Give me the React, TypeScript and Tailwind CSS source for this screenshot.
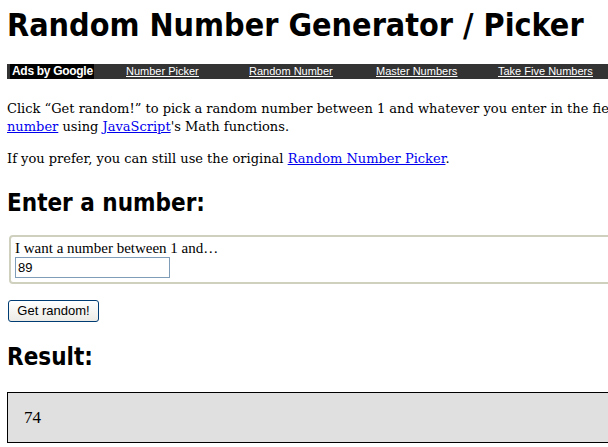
export default function App() {
  const serif = "font-['DejaVu_Serif',serif]";
  const head = "font-['DejaVu_Sans_Condensed','DejaVu_Sans',sans-serif] [font-stretch:condensed] font-bold";
  return (
    <div className="w-[608px] h-[447px] overflow-hidden bg-white text-black">
      <div className="w-[900px] pl-[7px] pt-[7px]">
        <h1 className={`${head} text-[32px] leading-[37px]`}>
          Random Number Generator / Picker
        </h1>
        <div className="mt-[20px] h-[15px] bg-[#333333] flex items-center font-['Liberation_Sans',Arial,sans-serif]">
          <div className="ml-[3px] h-[15px] w-[84px] bg-black text-white font-bold text-[12px] leading-[15px] pl-[2px] tracking-[-0.3px]">
            Ads by Google
          </div>
          <div className="flex text-[11px] leading-[15px] text-white underline">
            <a className="ml-[32px] w-[123px]">Number Picker</a>
            <a className="w-[127px]">Random Number</a>
            <a className="w-[122px]">Master Numbers</a>
            <a>Take Five Numbers</a>
          </div>
        </div>
        <div className={`${serif} text-[13px] leading-[18px] mt-[21px]`}>
          <p>
            Click “Get random!” to pick a random number between 1 and whatever you enter in the field. This gives a random
            <br />
            <a className="text-[#0000ee] underline">number</a> using{" "}
            <a className="text-[#0000ee] underline">JavaScript</a>'s Math functions.
          </p>
          <p className="mt-[14px]">
            If you prefer, you can still use the original{" "}
            <a className="text-[#0000ee] underline">Random Number Picker</a>.
          </p>
        </div>
        <h2 className={`${head} text-[24px] leading-[28px] mt-[21px]`}>
          Enter a number:
        </h2>
        <div className="mt-[18px] ml-[2px] border-2 border-[#d0d0bf] rounded-[4px] px-[4px] pt-[2px] pb-[4px] font-['Liberation_Serif',serif] text-[15px] leading-[18px]">
          <div>I want a number between 1 and…</div>
          <div className="w-[155px] h-[21px] border border-[#7f9db9] px-[2px] font-['Liberation_Sans',Arial,sans-serif] text-[13px] leading-[19px]">
            89
          </div>
        </div>
        <div className="mt-[16px] ml-[1px] w-[91px] h-[22px] border border-[#003c74] rounded-[3px] bg-gradient-to-b from-white to-[#ecebe6] flex items-center justify-center font-['Liberation_Sans',Arial,sans-serif] text-[13px]">
          Get random!
        </div>
        <h2 className={`${head} text-[24px] leading-[28px] mt-[21px]`}>
          Result:
        </h2>
        <div className="mt-[21px] h-[51px] border border-black bg-[#e0e0e0] pl-[16px] flex items-center font-['Liberation_Serif',serif] text-[17px]">
          74
        </div>
      </div>
    </div>
  );
}
